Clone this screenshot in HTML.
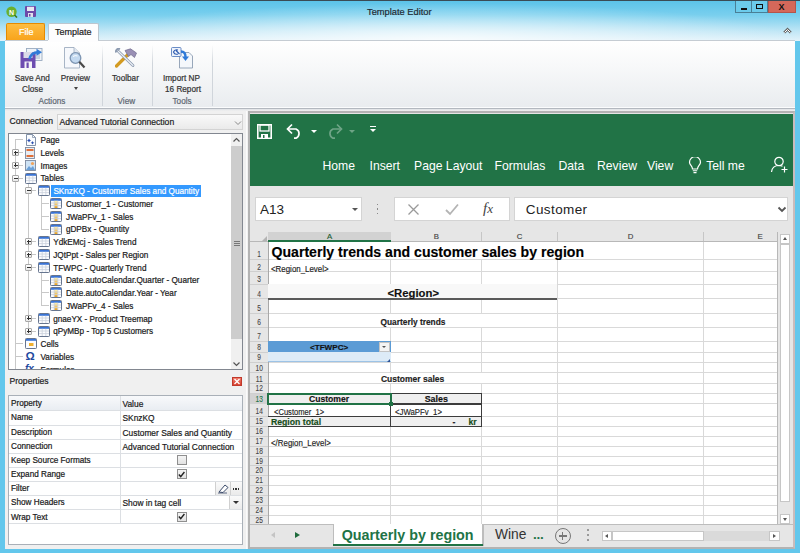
<!DOCTYPE html><html><head><meta charset="utf-8"><style>
*{margin:0;padding:0;box-sizing:border-box}
html,body{width:800px;height:553px;overflow:hidden;background:#63c7ec;font-family:"Liberation Sans", sans-serif;}
.ab{position:absolute}
.t{position:absolute;white-space:nowrap;line-height:1}
</style></head><body>

<div class="ab" style="left:0;top:0;width:800px;height:1px;background:#3a4b55"></div>
<div class="ab" style="left:0;top:1px;width:800px;height:40px;background:linear-gradient(#5cc3e9 0%,#79cfee 35%,#bfe6f6 75%,#e2f3fb 100%)"></div>
<div class="ab" style="left:0px;top:1px;width:800px;height:40px;background:radial-gradient(ellipse 45% 95% at 55% 100%,rgba(255,255,255,0.8),rgba(255,255,255,0) 100%)"></div>
<div class="t" style="left:367px;top:7.5px;font-size:9.3px;color:#1e2a33;-webkit-text-stroke:0.2px #1e2a33">Template Editor</div>
<div class="ab" style="left:735px;top:1px;width:17px;height:12px;border:1px solid #4a7f96;border-top:0;background:#6ccbeb"></div>
<div class="ab" style="left:741px;top:8px;width:6px;height:1.6px;background:#111"></div>
<div class="ab" style="left:751px;top:1px;width:17px;height:12px;border:1px solid #4a7f96;border-top:0;background:#6ccbeb"></div>
<div class="ab" style="left:756px;top:4px;width:7px;height:5px;border:1.5px solid #111"></div>
<div class="ab" style="left:768px;top:1px;width:28px;height:12px;background:#d4685a;border:1px solid #b5544a;border-top:0"></div>
<div class="t" style="left:778.5px;top:3px;font-size:9px;font-weight:bold;color:#111">X</div>
<svg class="ab" style="left:5px;top:6px" width="14" height="12" viewBox="0 0 14 12"><circle cx="6.5" cy="5.8" r="5.2" fill="#6ab02e"/><path d="M9.5 9 L12 11.5" stroke="#3d7a1a" stroke-width="1.6"/><text x="6.5" y="8.5" font-family="Liberation Sans" font-size="7" font-weight="bold" fill="#fff" text-anchor="middle">N</text></svg>
<svg class="ab" style="left:25px;top:6px" width="11" height="11" viewBox="0 0 11 11"><rect x="0" y="0" width="11" height="11" rx="1" fill="#6d4aa8"/><rect x="2" y="0.8" width="7" height="4.2" fill="#e8e8f0"/><rect x="3" y="7" width="5" height="4" fill="#e0e0ea"/><rect x="4" y="8" width="1.5" height="2.5" fill="#6d4aa8"/></svg>
<div class="ab" style="left:6px;top:23px;width:39px;height:18px;border:1px solid #e58a00;border-bottom:0;border-radius:2px 2px 0 0;background:linear-gradient(#fdbd40,#f8a21a)"></div>
<div class="t" style="left:19px;top:28px;font-size:9px;color:#fff;-webkit-text-stroke:0.2px #fff">File</div>
<div class="ab" style="left:48px;top:23px;width:51px;height:19px;border:1px solid #bcc6cf;border-bottom:0;border-radius:2px 2px 0 0;background:#fdfdfe"></div>
<div class="t" style="left:55px;top:28px;font-size:9px;color:#222;-webkit-text-stroke:0.2px #222">Template</div>
<svg class="ab" style="left:782.5px;top:27px" width="9" height="7" viewBox="0 0 9 7"><path d="M1.2 5.6 L4.5 2.3 L7.8 5.6" stroke="#666" stroke-width="2.6" fill="none"/><path d="M1.5 5.5 L4.5 2.5 L7.5 5.5" stroke="#fff" stroke-width="1" fill="none"/></svg>
<div class="ab" style="left:5px;top:40px;width:790px;height:68px;border-top:1px solid #c5ccd3;background:linear-gradient(#ffffff 0%,#f7f8f9 40%,#e9ecef 100%)"></div>
<div class="ab" style="left:48px;top:40px;width:50px;height:2px;background:#fdfdfe"></div>
<div class="ab" style="left:102px;top:45px;width:1px;height:61px;background:linear-gradient(rgba(200,205,212,0),#d0d5db 30%,#d0d5db)"></div>
<div class="ab" style="left:152px;top:45px;width:1px;height:61px;background:linear-gradient(rgba(200,205,212,0),#d0d5db 30%,#d0d5db)"></div>
<div class="ab" style="left:212px;top:45px;width:1px;height:61px;background:linear-gradient(rgba(200,205,212,0),#d0d5db 30%,#d0d5db)"></div>
<div class="t" style="left:14.8px;top:74.6px;font-size:8.2px;color:#333;-webkit-text-stroke:0.2px #333">Save And</div>
<div class="t" style="left:22px;top:85.6px;font-size:8.2px;color:#333;-webkit-text-stroke:0.2px #333">Close</div>
<div class="t" style="left:60.8px;top:74.6px;font-size:8.2px;color:#333;-webkit-text-stroke:0.2px #333">Preview</div>
<div class="ab" style="left:73.5px;top:87px;width:0;height:0;border-left:2.5px solid transparent;border-right:2.5px solid transparent;border-top:3px solid #444"></div>
<div class="t" style="left:38.5px;top:97.8px;font-size:8.2px;color:#5e6873;-webkit-text-stroke:0.2px #5e6873">Actions</div>
<div class="t" style="left:112px;top:74.6px;font-size:8.2px;color:#333;-webkit-text-stroke:0.2px #333">Toolbar</div>
<div class="t" style="left:117.5px;top:97.8px;font-size:8.2px;color:#5e6873;-webkit-text-stroke:0.2px #5e6873">View</div>
<div class="t" style="left:163px;top:74.6px;font-size:8.2px;color:#333;-webkit-text-stroke:0.2px #333">Import NP</div>
<div class="t" style="left:165px;top:85.6px;font-size:8.2px;color:#333;-webkit-text-stroke:0.2px #333">16 Report</div>
<div class="t" style="left:172.5px;top:97.8px;font-size:8.2px;color:#5e6873;-webkit-text-stroke:0.2px #5e6873">Tools</div>
<svg class="ab" style="left:20px;top:48px" width="24" height="21" viewBox="0 0 24 21">
<rect x="6.5" y="0.5" width="15.5" height="12" fill="#eef2f7" stroke="#9aabbf" stroke-width="0.9"/>
<rect x="14" y="6" width="6" height="5" fill="#c9d3e0"/>
<path d="M0.5 4 H13 L15.5 6.5 V20 H0.5Z" fill="#6d4db0"/>
<rect x="3.5" y="4" width="9" height="6" fill="#dcdbe8"/>
<rect x="4.5" y="13.5" width="7.5" height="6.5" fill="#f4f4f8"/>
<rect x="6.5" y="14.5" width="2.2" height="5.5" fill="#6d4db0"/>
<path d="M9.5 11 Q11 4.5 18 4.2" stroke="#2f7ad8" stroke-width="2.6" fill="none"/>
<path d="M16.5 0.8 L22 4.3 L16.5 7.8Z" fill="#2f7ad8"/>
</svg>
<svg class="ab" style="left:64px;top:47px" width="23" height="22" viewBox="0 0 23 22">
<path d="M0.5 0.5 H10 L15.5 6 V21 H0.5Z" fill="#f6f8fc" stroke="#9eadc0" stroke-width="0.9"/>
<path d="M10 0.5 V6 H15.5" fill="#e2e8f0" stroke="#9eadc0" stroke-width="0.8"/>
<circle cx="11.5" cy="11" r="5.3" fill="#c3d9f0" stroke="#7d95b2" stroke-width="1.3"/>
<path d="M9 9.5 Q11 8 13.5 9" stroke="#fff" stroke-width="1" fill="none"/>
<path d="M15.3 14.8 L20.5 20.5" stroke="#4a4a4a" stroke-width="2.2"/>
</svg>
<svg class="ab" style="left:115px;top:48px" width="23" height="20" viewBox="0 0 23 20">
<path d="M1.5 18 L13.5 6" stroke="#d39b22" stroke-width="3.2" stroke-linecap="round"/>
<path d="M10 2.5 L15.5 0.8 L21.5 5 L19.5 9.5 L16 6.5 L13.5 8.5Z" fill="#9a90b5" stroke="#6e6a8c" stroke-width="0.7"/>
<path d="M3.5 3.5 L18 17.5" stroke="#8c9ab0" stroke-width="2.8" stroke-linecap="round"/>
<path d="M1 4.5 A3 3 0 0 1 5 1" stroke="#8c9ab0" stroke-width="2" fill="none"/>
<path d="M3.5 3.5 L18 17.5" stroke="#eef2f7" stroke-width="1.1" stroke-linecap="round"/>
</svg>
<svg class="ab" style="left:171px;top:46.5px" width="23" height="22" viewBox="0 0 23 22">
<path d="M8.5 5.5 H18 L21.5 9 V21 H8.5Z" fill="#f4f7fb" stroke="#8d9db2" stroke-width="0.9"/>
<rect x="0.5" y="0.5" width="9.5" height="9" rx="1" fill="#eef3fb" stroke="#5a80c0" stroke-width="0.9"/>
<path d="M7 3 Q3.5 2 2.5 5 Q3.5 8 7 7 M5 3.5 L8.5 7" stroke="#2d5bb0" stroke-width="1.1" fill="none"/>
<path d="M10 4.5 Q14.5 4.5 14.5 10" stroke="#2f7ad8" stroke-width="2.4" fill="none"/>
<path d="M11 9.5 L14.5 14 L18 9.5Z" fill="#2f7ad8"/>
</svg>
<div class="ab" style="left:5px;top:108px;width:790px;height:441px;background:#f0f0f0"></div>
<div class="ab" style="left:5px;top:106.6px;width:790px;height:1px;background:#fbfcfd"></div>
<div class="ab" style="left:5px;top:107.6px;width:790px;height:1.5px;background:#b3b8bf"></div>
<div class="ab" style="left:5px;top:109.1px;width:790px;height:2px;background:linear-gradient(#dfe2e6,#f0f0f0)"></div>
<div class="ab" style="left:5px;top:111px;width:241px;height:438px;background:#f0f0f0"></div>
<div class="t" style="left:9.5px;top:116.8px;font-size:8.6px;color:#222;-webkit-text-stroke:0.2px #222">Connection</div>
<div class="ab" style="left:57px;top:114px;width:186px;height:16px;border:1px solid #d3d3d3;background:linear-gradient(#f9f9f9,#eaeaea)"></div>
<div class="t" style="left:59.5px;top:117.5px;font-size:8.6px;color:#222;-webkit-text-stroke:0.2px #222">Advanced Tutorial Connection</div>
<svg class="ab" style="left:233.5px;top:119.5px" width="8" height="6" viewBox="0 0 8 6"><path d="M1 1.5 L4 4.5 L7 1.5" stroke="#888" stroke-width="1" fill="none"/></svg>
<div class="ab" style="left:8px;top:133px;width:235px;height:237px;border:1px solid #828790;background:#fff;overflow:hidden">
<div class="ab" style="left:6.4px;top:5.800000000000011px;width:1px;height:229.5px;background:#c8c8c8"></div><div class="ab" style="left:18.9px;top:44.05000000000001px;width:1px;height:153.0px;background:#c8c8c8"></div><div class="ab" style="left:31.9px;top:56.80000000000001px;width:1px;height:38.25px;background:#c8c8c8"></div><div class="ab" style="left:31.9px;top:133.3px;width:1px;height:38.25px;background:#c8c8c8"></div><div class="ab" style="left:6.4px;top:5.300000000000011px;width:8px;height:1px;background:#c8c8c8"></div><svg class="ab" style="left:16.9px;top:0.4000000000000057px" width="10" height="12" viewBox="0 0 10 12"><path d="M0.5 0.5 H6.5 L9.5 3.5 V11.5 H0.5Z" fill="#fafcff" stroke="#7587a0" stroke-width="0.9"/><path d="M6.5 0.5 V3.5 H9.5" fill="none" stroke="#7587a0" stroke-width="0.7"/><path d="M3 4.5 L3.7 5.8 L5 6.5 L3.7 7.2 L3 8.5 L2.3 7.2 L1 6.5 L2.3 5.8Z M6.5 7 L7.1 8.2 L8.3 8.8 L7.1 9.4 L6.5 10.6 L5.9 9.4 L4.7 8.8 L5.9 8.2Z" fill="#2b4fb0"/></svg><div class="t" style="left:31.5px;top:3.0px;font-size:8.2px;color:#1a1a1a;-webkit-text-stroke:0.2px #1a1a1a">Page</div><div class="ab" style="left:6.4px;top:18.05000000000001px;width:8px;height:1px;background:#c8c8c8"></div><div class="ab" style="left:3.4000000000000004px;top:15.050000000000011px;width:7px;height:7px;border:1px solid #a8a8a8;border-radius:1px;background:linear-gradient(#fff,#e8e8e8)"></div><div class="ab" style="left:4.9px;top:18.05000000000001px;width:4px;height:1px;background:#333"></div><div class="ab" style="left:6.4px;top:16.55000000000001px;width:1px;height:4px;background:#333"></div><svg class="ab" style="left:15.899999999999999px;top:13.150000000000006px" width="10" height="12" viewBox="0 0 10 12"><rect x="0.5" y="0.5" width="9" height="11" fill="#e9edf3" stroke="#7d8ba0" stroke-width="0.9"/><rect x="1.5" y="2" width="7" height="2" fill="#e0703a"/><rect x="1.5" y="8" width="7" height="2" fill="#e0703a"/></svg><div class="t" style="left:31.5px;top:15.75px;font-size:8.2px;color:#1a1a1a;-webkit-text-stroke:0.2px #1a1a1a">Levels</div><div class="ab" style="left:6.4px;top:30.80000000000001px;width:8px;height:1px;background:#c8c8c8"></div><div class="ab" style="left:3.4000000000000004px;top:27.80000000000001px;width:7px;height:7px;border:1px solid #a8a8a8;border-radius:1px;background:linear-gradient(#fff,#e8e8e8)"></div><div class="ab" style="left:4.9px;top:30.80000000000001px;width:4px;height:1px;background:#333"></div><div class="ab" style="left:6.4px;top:29.30000000000001px;width:1px;height:4px;background:#333"></div><svg class="ab" style="left:15.899999999999999px;top:25.900000000000006px" width="11" height="11" viewBox="0 0 11 11"><rect x="0.5" y="0.5" width="10" height="10" fill="#cfe3f5" stroke="#7d8ba0" stroke-width="0.9"/><circle cx="7.5" cy="3.5" r="1.6" fill="#f2a35a"/><path d="M1 10 L4 6 L6 8 L8 6 L10 10Z" fill="#6aa0d8"/></svg><div class="t" style="left:31.5px;top:28.5px;font-size:8.2px;color:#1a1a1a;-webkit-text-stroke:0.2px #1a1a1a">Images</div><div class="ab" style="left:6.4px;top:43.55000000000001px;width:8px;height:1px;background:#c8c8c8"></div><div class="ab" style="left:3.4000000000000004px;top:40.55000000000001px;width:7px;height:7px;border:1px solid #a8a8a8;border-radius:1px;background:linear-gradient(#fff,#e8e8e8)"></div><div class="ab" style="left:4.9px;top:43.55000000000001px;width:4px;height:1px;background:#333"></div><svg class="ab" style="left:15.899999999999999px;top:38.650000000000006px" width="12" height="11" viewBox="0 0 12 11"><rect x="0.5" y="0.5" width="11" height="10" rx="0.8" fill="#fbfcfe" stroke="#66758f" stroke-width="1"/><rect x="1" y="1" width="10" height="1.8" fill="#3a74d6"/><path d="M1 5 H11 M1 7.6 H11 M4.2 2.8 V10 M7.8 2.8 V10" stroke="#c9d1dc" stroke-width="0.8"/></svg><div class="t" style="left:31.5px;top:41.25px;font-size:8.2px;color:#1a1a1a;-webkit-text-stroke:0.2px #1a1a1a">Tables</div><div class="ab" style="left:19.15px;top:56.30000000000001px;width:8px;height:1px;background:#c8c8c8"></div><div class="ab" style="left:16.15px;top:53.30000000000001px;width:7px;height:7px;border:1px solid #a8a8a8;border-radius:1px;background:linear-gradient(#fff,#e8e8e8)"></div><div class="ab" style="left:17.65px;top:56.30000000000001px;width:4px;height:1px;background:#333"></div><svg class="ab" style="left:28.65px;top:51.400000000000006px" width="12" height="11" viewBox="0 0 12 11"><rect x="0.5" y="0.5" width="11" height="10" rx="0.8" fill="#fbfcfe" stroke="#66758f" stroke-width="1"/><rect x="1" y="1" width="10" height="1.8" fill="#3a74d6"/><path d="M1 5 H11 M1 7.6 H11 M4.2 2.8 V10 M7.8 2.8 V10" stroke="#c9d1dc" stroke-width="0.8"/></svg><div class="ab" style="left:41.6px;top:51.30000000000001px;width:150px;height:12px;background:#3399ff"></div><div class="t" style="left:44.400000000000006px;top:54.0px;font-size:8.2px;color:#fff;-webkit-text-stroke:0.2px #fff">SKnzKQ - Customer Sales and Quantity</div><div class="ab" style="left:31.9px;top:69.05000000000001px;width:8px;height:1px;background:#c8c8c8"></div><svg class="ab" style="left:41.4px;top:64.15px" width="12" height="11" viewBox="0 0 12 11"><defs><linearGradient id="yg" x1="0" y1="0" x2="0" y2="1"><stop offset="0" stop-color="#fff2b0"/><stop offset="1" stop-color="#e8a020"/></linearGradient></defs><rect x="0.5" y="0.5" width="11" height="10" rx="0.8" fill="#fbfcfe" stroke="#66758f" stroke-width="1"/><rect x="1" y="1" width="10" height="1.8" fill="#3a74d6"/><rect x="4.2" y="2.8" width="3.6" height="7.2" fill="url(#yg)"/><path d="M1 5 H11 M1 7.6 H11 M4.2 2.8 V10 M7.8 2.8 V10" stroke="#c9d1dc" stroke-width="0.8"/></svg><div class="t" style="left:56.900000000000006px;top:66.75px;font-size:8.2px;color:#1a1a1a;-webkit-text-stroke:0.2px #1a1a1a">Customer_1 - Customer</div><div class="ab" style="left:31.9px;top:81.80000000000001px;width:8px;height:1px;background:#c8c8c8"></div><svg class="ab" style="left:41.4px;top:76.9px" width="12" height="11" viewBox="0 0 12 11"><defs><linearGradient id="yg" x1="0" y1="0" x2="0" y2="1"><stop offset="0" stop-color="#fff2b0"/><stop offset="1" stop-color="#e8a020"/></linearGradient></defs><rect x="0.5" y="0.5" width="11" height="10" rx="0.8" fill="#fbfcfe" stroke="#66758f" stroke-width="1"/><rect x="1" y="1" width="10" height="1.8" fill="#3a74d6"/><rect x="4.2" y="2.8" width="3.6" height="7.2" fill="url(#yg)"/><path d="M1 5 H11 M1 7.6 H11 M4.2 2.8 V10 M7.8 2.8 V10" stroke="#c9d1dc" stroke-width="0.8"/></svg><div class="t" style="left:56.900000000000006px;top:79.5px;font-size:8.2px;color:#1a1a1a;-webkit-text-stroke:0.2px #1a1a1a">JWaPFv_1 - Sales</div><div class="ab" style="left:31.9px;top:94.55000000000001px;width:8px;height:1px;background:#c8c8c8"></div><svg class="ab" style="left:41.4px;top:89.65px" width="12" height="11" viewBox="0 0 12 11"><defs><linearGradient id="yg" x1="0" y1="0" x2="0" y2="1"><stop offset="0" stop-color="#fff2b0"/><stop offset="1" stop-color="#e8a020"/></linearGradient></defs><rect x="0.5" y="0.5" width="11" height="10" rx="0.8" fill="#fbfcfe" stroke="#66758f" stroke-width="1"/><rect x="1" y="1" width="10" height="1.8" fill="#3a74d6"/><rect x="4.2" y="2.8" width="3.6" height="7.2" fill="url(#yg)"/><path d="M1 5 H11 M1 7.6 H11 M4.2 2.8 V10 M7.8 2.8 V10" stroke="#c9d1dc" stroke-width="0.8"/></svg><div class="t" style="left:56.900000000000006px;top:92.25px;font-size:8.2px;color:#1a1a1a;-webkit-text-stroke:0.2px #1a1a1a">gDPBx - Quantity</div><div class="ab" style="left:19.15px;top:107.30000000000001px;width:8px;height:1px;background:#c8c8c8"></div><div class="ab" style="left:16.15px;top:104.30000000000001px;width:7px;height:7px;border:1px solid #a8a8a8;border-radius:1px;background:linear-gradient(#fff,#e8e8e8)"></div><div class="ab" style="left:17.65px;top:107.30000000000001px;width:4px;height:1px;background:#333"></div><div class="ab" style="left:19.15px;top:105.80000000000001px;width:1px;height:4px;background:#333"></div><svg class="ab" style="left:28.65px;top:102.4px" width="12" height="11" viewBox="0 0 12 11"><rect x="0.5" y="0.5" width="11" height="10" rx="0.8" fill="#fbfcfe" stroke="#66758f" stroke-width="1"/><rect x="1" y="1" width="10" height="1.8" fill="#3a74d6"/><path d="M1 5 H11 M1 7.6 H11 M4.2 2.8 V10 M7.8 2.8 V10" stroke="#c9d1dc" stroke-width="0.8"/></svg><div class="t" style="left:44.2px;top:105.0px;font-size:8.2px;color:#1a1a1a;-webkit-text-stroke:0.2px #1a1a1a">YdkEMcj - Sales Trend</div><div class="ab" style="left:19.15px;top:120.05000000000001px;width:8px;height:1px;background:#c8c8c8"></div><div class="ab" style="left:16.15px;top:117.05000000000001px;width:7px;height:7px;border:1px solid #a8a8a8;border-radius:1px;background:linear-gradient(#fff,#e8e8e8)"></div><div class="ab" style="left:17.65px;top:120.05000000000001px;width:4px;height:1px;background:#333"></div><div class="ab" style="left:19.15px;top:118.55000000000001px;width:1px;height:4px;background:#333"></div><svg class="ab" style="left:28.65px;top:115.15px" width="12" height="11" viewBox="0 0 12 11"><rect x="0.5" y="0.5" width="11" height="10" rx="0.8" fill="#fbfcfe" stroke="#66758f" stroke-width="1"/><rect x="1" y="1" width="10" height="1.8" fill="#3a74d6"/><path d="M1 5 H11 M1 7.6 H11 M4.2 2.8 V10 M7.8 2.8 V10" stroke="#c9d1dc" stroke-width="0.8"/></svg><div class="t" style="left:44.2px;top:117.75px;font-size:8.2px;color:#1a1a1a;-webkit-text-stroke:0.2px #1a1a1a">JQtPpt - Sales per Region</div><div class="ab" style="left:19.15px;top:132.8px;width:8px;height:1px;background:#c8c8c8"></div><div class="ab" style="left:16.15px;top:129.8px;width:7px;height:7px;border:1px solid #a8a8a8;border-radius:1px;background:linear-gradient(#fff,#e8e8e8)"></div><div class="ab" style="left:17.65px;top:132.8px;width:4px;height:1px;background:#333"></div><svg class="ab" style="left:28.65px;top:127.90000000000003px" width="12" height="11" viewBox="0 0 12 11"><rect x="0.5" y="0.5" width="11" height="10" rx="0.8" fill="#fbfcfe" stroke="#66758f" stroke-width="1"/><rect x="1" y="1" width="10" height="1.8" fill="#3a74d6"/><path d="M1 5 H11 M1 7.6 H11 M4.2 2.8 V10 M7.8 2.8 V10" stroke="#c9d1dc" stroke-width="0.8"/></svg><div class="t" style="left:44.2px;top:130.5px;font-size:8.2px;color:#1a1a1a;-webkit-text-stroke:0.2px #1a1a1a">TFWPC - Quarterly Trend</div><div class="ab" style="left:31.9px;top:145.55px;width:8px;height:1px;background:#c8c8c8"></div><svg class="ab" style="left:41.4px;top:140.65000000000003px" width="12" height="11" viewBox="0 0 12 11"><defs><linearGradient id="yg" x1="0" y1="0" x2="0" y2="1"><stop offset="0" stop-color="#fff2b0"/><stop offset="1" stop-color="#e8a020"/></linearGradient></defs><rect x="0.5" y="0.5" width="11" height="10" rx="0.8" fill="#fbfcfe" stroke="#66758f" stroke-width="1"/><rect x="1" y="1" width="10" height="1.8" fill="#3a74d6"/><rect x="4.2" y="2.8" width="3.6" height="7.2" fill="url(#yg)"/><path d="M1 5 H11 M1 7.6 H11 M4.2 2.8 V10 M7.8 2.8 V10" stroke="#c9d1dc" stroke-width="0.8"/></svg><div class="t" style="left:56.900000000000006px;top:143.25px;font-size:8.2px;color:#1a1a1a;-webkit-text-stroke:0.2px #1a1a1a">Date.autoCalendar.Quarter - Quarter</div><div class="ab" style="left:31.9px;top:158.3px;width:8px;height:1px;background:#c8c8c8"></div><svg class="ab" style="left:41.4px;top:153.40000000000003px" width="12" height="11" viewBox="0 0 12 11"><defs><linearGradient id="yg" x1="0" y1="0" x2="0" y2="1"><stop offset="0" stop-color="#fff2b0"/><stop offset="1" stop-color="#e8a020"/></linearGradient></defs><rect x="0.5" y="0.5" width="11" height="10" rx="0.8" fill="#fbfcfe" stroke="#66758f" stroke-width="1"/><rect x="1" y="1" width="10" height="1.8" fill="#3a74d6"/><rect x="4.2" y="2.8" width="3.6" height="7.2" fill="url(#yg)"/><path d="M1 5 H11 M1 7.6 H11 M4.2 2.8 V10 M7.8 2.8 V10" stroke="#c9d1dc" stroke-width="0.8"/></svg><div class="t" style="left:56.900000000000006px;top:156.0px;font-size:8.2px;color:#1a1a1a;-webkit-text-stroke:0.2px #1a1a1a">Date.autoCalendar.Year - Year</div><div class="ab" style="left:31.9px;top:171.05px;width:8px;height:1px;background:#c8c8c8"></div><svg class="ab" style="left:41.4px;top:166.15000000000003px" width="12" height="11" viewBox="0 0 12 11"><defs><linearGradient id="yg" x1="0" y1="0" x2="0" y2="1"><stop offset="0" stop-color="#fff2b0"/><stop offset="1" stop-color="#e8a020"/></linearGradient></defs><rect x="0.5" y="0.5" width="11" height="10" rx="0.8" fill="#fbfcfe" stroke="#66758f" stroke-width="1"/><rect x="1" y="1" width="10" height="1.8" fill="#3a74d6"/><rect x="4.2" y="2.8" width="3.6" height="7.2" fill="url(#yg)"/><path d="M1 5 H11 M1 7.6 H11 M4.2 2.8 V10 M7.8 2.8 V10" stroke="#c9d1dc" stroke-width="0.8"/></svg><div class="t" style="left:56.900000000000006px;top:168.75px;font-size:8.2px;color:#1a1a1a;-webkit-text-stroke:0.2px #1a1a1a">JWaPFv_4 - Sales</div><div class="ab" style="left:19.15px;top:183.8px;width:8px;height:1px;background:#c8c8c8"></div><div class="ab" style="left:16.15px;top:180.8px;width:7px;height:7px;border:1px solid #a8a8a8;border-radius:1px;background:linear-gradient(#fff,#e8e8e8)"></div><div class="ab" style="left:17.65px;top:183.8px;width:4px;height:1px;background:#333"></div><div class="ab" style="left:19.15px;top:182.3px;width:1px;height:4px;background:#333"></div><svg class="ab" style="left:28.65px;top:178.90000000000003px" width="12" height="11" viewBox="0 0 12 11"><rect x="0.5" y="0.5" width="11" height="10" rx="0.8" fill="#fbfcfe" stroke="#66758f" stroke-width="1"/><rect x="1" y="1" width="10" height="1.8" fill="#3a74d6"/><path d="M1 5 H11 M1 7.6 H11 M4.2 2.8 V10 M7.8 2.8 V10" stroke="#c9d1dc" stroke-width="0.8"/></svg><div class="t" style="left:44.2px;top:181.5px;font-size:8.2px;color:#1a1a1a;-webkit-text-stroke:0.2px #1a1a1a">gnaeYX - Product Treemap</div><div class="ab" style="left:19.15px;top:196.55px;width:8px;height:1px;background:#c8c8c8"></div><div class="ab" style="left:16.15px;top:193.55px;width:7px;height:7px;border:1px solid #a8a8a8;border-radius:1px;background:linear-gradient(#fff,#e8e8e8)"></div><div class="ab" style="left:17.65px;top:196.55px;width:4px;height:1px;background:#333"></div><div class="ab" style="left:19.15px;top:195.05px;width:1px;height:4px;background:#333"></div><svg class="ab" style="left:28.65px;top:191.65000000000003px" width="12" height="11" viewBox="0 0 12 11"><rect x="0.5" y="0.5" width="11" height="10" rx="0.8" fill="#fbfcfe" stroke="#66758f" stroke-width="1"/><rect x="1" y="1" width="10" height="1.8" fill="#3a74d6"/><path d="M1 5 H11 M1 7.6 H11 M4.2 2.8 V10 M7.8 2.8 V10" stroke="#c9d1dc" stroke-width="0.8"/></svg><div class="t" style="left:44.2px;top:194.25px;font-size:8.2px;color:#1a1a1a;-webkit-text-stroke:0.2px #1a1a1a">qPyMBp - Top 5 Customers</div><div class="ab" style="left:6.4px;top:209.3px;width:8px;height:1px;background:#c8c8c8"></div><svg class="ab" style="left:15.899999999999999px;top:204.40000000000003px" width="12" height="11" viewBox="0 0 12 11"><rect x="0.5" y="0.5" width="11" height="10" rx="0.8" fill="#fbfcfe" stroke="#66758f" stroke-width="1"/><rect x="1" y="1" width="10" height="1.8" fill="#3a74d6"/><rect x="4" y="5" width="4.5" height="3" fill="#f0b030"/></svg><div class="t" style="left:31.5px;top:207.0px;font-size:8.2px;color:#1a1a1a;-webkit-text-stroke:0.2px #1a1a1a">Cells</div><div class="ab" style="left:6.4px;top:222.05px;width:8px;height:1px;background:#c8c8c8"></div><div class="t" style="left:16.4px;top:216.65000000000003px;font-size:11.5px;font-weight:bold;color:#1f4aa0">&#937;</div><div class="t" style="left:31.5px;top:219.75px;font-size:8.2px;color:#1a1a1a;-webkit-text-stroke:0.2px #1a1a1a">Variables</div><div class="ab" style="left:6.4px;top:234.8px;width:8px;height:1px;background:#c8c8c8"></div><div class="t" style="left:15.899999999999999px;top:229.90000000000003px;font-size:10px;font-style:italic;font-weight:bold;color:#1f4aa0">fx</div><div class="t" style="left:31.5px;top:232.5px;font-size:8.2px;color:#1a1a1a;-webkit-text-stroke:0.2px #1a1a1a">Formulas</div><div class="ab" style="left:222px;top:0;width:11px;height:235px;background:#f0f0f0"></div><div class="ab" style="left:222px;top:12.300000000000011px;width:11px;height:193px;background:#cdcdcd"></div><svg class="ab" style="left:223px;top:2px" width="9" height="8" viewBox="0 0 9 8"><path d="M1.5 5.5 L4.5 2.5 L7.5 5.5" stroke="#555" stroke-width="1.2" fill="none"/></svg><svg class="ab" style="left:223px;top:226px" width="9" height="8" viewBox="0 0 9 8"><path d="M1.5 2.5 L4.5 5.5 L7.5 2.5" stroke="#555" stroke-width="1.2" fill="none"/></svg><div class="ab" style="left:224.5px;top:107px;width:6px;height:5px;border-top:1px solid #777;border-bottom:1px solid #777"></div><div class="ab" style="left:224.5px;top:109px;width:6px;height:1px;background:#777"></div>
</div>
<div class="t" style="left:9.5px;top:377px;font-size:8.6px;color:#222;-webkit-text-stroke:0.2px #222">Properties</div>
<div class="ab" style="left:232px;top:377px;width:10px;height:9px;border:1px solid #c0392b;background:linear-gradient(#f07a6a,#d6402e)"></div>
<svg class="ab" style="left:233px;top:378px" width="8" height="7" viewBox="0 0 8 7"><path d="M1.5 1 L6.5 6 M6.5 1 L1.5 6" stroke="#fff" stroke-width="1.3"/></svg>
<div class="ab" style="left:8px;top:395px;width:235px;height:150px;border:1px solid #a9b0b8;background:#fff"></div>
<div class="ab" style="left:9px;top:396px;width:233px;height:14px;background:linear-gradient(#f8f9fb,#e9edf2)"></div>
<div class="ab" style="left:9px;top:409.7px;width:233px;height:1px;background:#dcdfe3"></div>
<div class="ab" style="left:9px;top:424.6px;width:233px;height:1px;background:#dcdfe3"></div>
<div class="ab" style="left:9px;top:438.9px;width:233px;height:1px;background:#dcdfe3"></div>
<div class="ab" style="left:9px;top:452.8px;width:233px;height:1px;background:#dcdfe3"></div>
<div class="ab" style="left:9px;top:467.0px;width:233px;height:1px;background:#dcdfe3"></div>
<div class="ab" style="left:9px;top:481.3px;width:233px;height:1px;background:#dcdfe3"></div>
<div class="ab" style="left:9px;top:495.2px;width:233px;height:1px;background:#dcdfe3"></div>
<div class="ab" style="left:9px;top:509.4px;width:233px;height:1px;background:#dcdfe3"></div>
<div class="ab" style="left:9px;top:523.3px;width:233px;height:1px;background:#dcdfe3"></div>
<div class="ab" style="left:119.8px;top:396px;width:1px;height:128px;background:#dcdfe3"></div>
<div class="t" style="left:11px;top:399.5px;font-size:8.2px;color:#1a1a1a;-webkit-text-stroke:0.2px #1a1a1a">Property</div>
<div class="t" style="left:122.5px;top:399.5px;font-size:8.4px;color:#1a1a1a;-webkit-text-stroke:0.2px #1a1a1a">Value</div>
<div class="t" style="left:11px;top:413.8px;font-size:8.2px;color:#1a1a1a;-webkit-text-stroke:0.2px #1a1a1a">Name</div>
<div class="t" style="left:122.5px;top:413.8px;font-size:8.4px;color:#1a1a1a;-webkit-text-stroke:0.2px #1a1a1a">SKnzKQ</div>
<div class="t" style="left:11px;top:428.70000000000005px;font-size:8.2px;color:#1a1a1a;-webkit-text-stroke:0.2px #1a1a1a">Description</div>
<div class="t" style="left:122.5px;top:428.70000000000005px;font-size:8.4px;color:#1a1a1a;-webkit-text-stroke:0.2px #1a1a1a">Customer Sales and Quantity</div>
<div class="t" style="left:11px;top:443.0px;font-size:8.2px;color:#1a1a1a;-webkit-text-stroke:0.2px #1a1a1a">Connection</div>
<div class="t" style="left:122.5px;top:443.0px;font-size:8.4px;color:#1a1a1a;-webkit-text-stroke:0.2px #1a1a1a">Advanced Tutorial Connection</div>
<div class="t" style="left:11px;top:456.90000000000003px;font-size:8.2px;color:#1a1a1a;-webkit-text-stroke:0.2px #1a1a1a">Keep Source Formats</div>
<div class="t" style="left:11px;top:471.1px;font-size:8.2px;color:#1a1a1a;-webkit-text-stroke:0.2px #1a1a1a">Expand Range</div>
<div class="t" style="left:11px;top:485.40000000000003px;font-size:8.2px;color:#1a1a1a;-webkit-text-stroke:0.2px #1a1a1a">Filter</div>
<div class="t" style="left:11px;top:499.3px;font-size:8.2px;color:#1a1a1a;-webkit-text-stroke:0.2px #1a1a1a">Show Headers</div>
<div class="t" style="left:122.5px;top:499.3px;font-size:8.4px;color:#1a1a1a;-webkit-text-stroke:0.2px #1a1a1a">Show in tag cell</div>
<div class="t" style="left:11px;top:513.4999999999999px;font-size:8.2px;color:#1a1a1a;-webkit-text-stroke:0.2px #1a1a1a">Wrap Text</div>
<div class="ab" style="left:176.5px;top:455.0px;width:10px;height:10px;border:1px solid #8f8f8f;background:linear-gradient(#f4f4f4,#e2e2e2)"></div>
<div class="ab" style="left:176.5px;top:469.2px;width:10px;height:10px;border:1px solid #8f8f8f;background:linear-gradient(#f4f4f4,#e2e2e2)"></div>
<svg class="ab" style="left:177px;top:469.7px" width="9" height="9" viewBox="0 0 9 9"><path d="M1.8 4.6 L3.7 6.6 L7.4 2" stroke="#222" stroke-width="1.4" fill="none"/></svg>
<div class="ab" style="left:176.5px;top:511.6px;width:10px;height:10px;border:1px solid #8f8f8f;background:linear-gradient(#f4f4f4,#e2e2e2)"></div>
<svg class="ab" style="left:177px;top:512.1px" width="9" height="9" viewBox="0 0 9 9"><path d="M1.8 4.6 L3.7 6.6 L7.4 2" stroke="#222" stroke-width="1.4" fill="none"/></svg>
<div class="ab" style="left:215px;top:482.3px;width:15px;height:13px;border-left:1px solid #d0d0d0;background:linear-gradient(#fafafa,#eaeaea)"></div>
<svg class="ab" style="left:217px;top:483.3px" width="12" height="11" viewBox="0 0 12 11"><path d="M2 9 L8 2 L11 4.5 L6 9.5 Z" fill="#fff" stroke="#3a4a6a" stroke-width="1"/><path d="M1 10 H10" stroke="#3a4a6a" stroke-width="0.8"/></svg>
<div class="ab" style="left:230px;top:482.3px;width:12px;height:13px;border-left:1px solid #d0d0d0;background:linear-gradient(#fafafa,#eaeaea)"></div>
<div class="ab" style="left:232.8px;top:488.3px;width:1.3px;height:1.3px;background:#333"></div>
<div class="ab" style="left:235.3px;top:488.3px;width:1.3px;height:1.3px;background:#333"></div>
<div class="ab" style="left:237.8px;top:488.3px;width:1.3px;height:1.3px;background:#333"></div>
<div class="ab" style="left:229px;top:496.2px;width:13px;height:13px;border-left:1px solid #d0d0d0;background:linear-gradient(#fafafa,#ececec)"></div>
<div class="ab" style="left:233px;top:501.2px;width:0;height:0;border-left:3px solid transparent;border-right:3px solid transparent;border-top:3px solid #333"></div>
<div class="ab" style="left:246px;top:111px;width:1.2px;height:438px;background:#fbfbfb"></div>
<div class="ab" style="left:247.5px;top:111px;width:547.5px;height:438px;background:#e6e6e6;border:2px solid #b9b9b9;border-color:#b3b3b3 #c9bcbc #b3b3b3 #b3b3b3"></div>
<div class="ab" style="left:249.5px;top:113.5px;width:543.5px;height:72.5px;background:#217346"></div>
<svg class="ab" style="left:257px;top:123.5px" width="15" height="15" viewBox="0 0 15 15">
<path d="M0.8 0.8 H14.2 V14.2 H0.8Z" fill="none" stroke="#fff" stroke-width="1.6"/>
<rect x="3" y="1" width="9" height="6" fill="none" stroke="#fff" stroke-width="1.3"/>
<rect x="4" y="10" width="7" height="4.5" fill="#fff"/><rect x="6" y="11" width="1.5" height="3" fill="#217346"/>
</svg>
<svg class="ab" style="left:286px;top:123px" width="18" height="16" viewBox="0 0 18 16">
<path d="M2 6 H10 A5 5 0 0 1 10 15.2 H8" fill="none" stroke="#fff" stroke-width="1.7"/>
<path d="M6 1.5 L1.5 6 L6 10.5" fill="none" stroke="#fff" stroke-width="1.7"/>
</svg>
<div class="ab" style="left:310.5px;top:129.5px;width:0;height:0;border-left:3px solid transparent;border-right:3px solid transparent;border-top:3px solid #fff"></div>
<svg class="ab" style="left:325px;top:123px" width="18" height="16" viewBox="0 0 18 16" opacity="0.35">
<path d="M16 6 H8 A5 5 0 0 0 8 15.2 H10" fill="none" stroke="#fff" stroke-width="1.7"/>
<path d="M12 1.5 L16.5 6 L12 10.5" fill="none" stroke="#fff" stroke-width="1.7"/>
</svg>
<div class="ab" style="left:348.5px;top:129.5px;width:0;height:0;border-left:3px solid transparent;border-right:3px solid transparent;border-top:3px solid rgba(255,255,255,0.35)"></div>
<div class="ab" style="left:369.5px;top:126px;width:6px;height:1.3px;background:#fff"></div>
<div class="ab" style="left:369.5px;top:129px;width:0;height:0;border-left:3px solid transparent;border-right:3px solid transparent;border-top:3.5px solid #fff"></div>
<div class="t" style="left:322.5px;top:159.5px;font-size:12.2px;color:#fff">Home</div>
<div class="t" style="left:369.5px;top:159.5px;font-size:12.2px;color:#fff">Insert</div>
<div class="t" style="left:414px;top:159.5px;font-size:12.2px;color:#fff">Page Layout</div>
<div class="t" style="left:494.5px;top:159.5px;font-size:12.2px;color:#fff">Formulas</div>
<div class="t" style="left:558.5px;top:159.5px;font-size:12.2px;color:#fff">Data</div>
<div class="t" style="left:597px;top:159.5px;font-size:12.2px;color:#fff">Review</div>
<div class="t" style="left:647px;top:159.5px;font-size:12.2px;color:#fff">View</div>
<div class="t" style="left:706.2px;top:159.5px;font-size:12.2px;color:#fff">Tell me</div>
<svg class="ab" style="left:688px;top:157px" width="14" height="17" viewBox="0 0 14 17">
<path d="M4.5 12 C4.5 9 1.5 8 1.5 5.2 A5.5 5.5 0 0 1 12.5 5.2 C12.5 8 9.5 9 9.5 12Z" fill="none" stroke="#fff" stroke-width="1.2"/>
<path d="M4.8 13.8 H9.2 M5.5 15.6 H8.5" stroke="#fff" stroke-width="1.1"/>
</svg>
<svg class="ab" style="left:770px;top:156px" width="19" height="17" viewBox="0 0 19 17">
<circle cx="9" cy="5.5" r="4.2" fill="none" stroke="#fff" stroke-width="1.2"/>
<path d="M1.5 16 C2 11.5 5 9.5 9 9.5 C10.5 9.5 11.5 9.8 12.5 10.3" fill="none" stroke="#fff" stroke-width="1.2"/>
<path d="M14.5 10.5 V16.5 M11.5 13.5 H17.5" stroke="#fff" stroke-width="1.2"/>
</svg>
<div class="ab" style="left:254.7px;top:197.3px;width:107.5px;height:24px;background:#fff;border:1px solid #d4d4d4"></div>
<div class="t" style="left:260px;top:203px;font-size:13.5px;color:#222">A13</div>
<div class="ab" style="left:352px;top:208px;width:0;height:0;border-left:3.2px solid transparent;border-right:3.2px solid transparent;border-top:3.2px solid #555"></div>
<div class="ab" style="left:376.8px;top:203.8px;width:1.6px;height:1.6px;background:#8a8a8a"></div>
<div class="ab" style="left:376.8px;top:208.3px;width:1.6px;height:1.6px;background:#8a8a8a"></div>
<div class="ab" style="left:376.8px;top:212.8px;width:1.6px;height:1.6px;background:#8a8a8a"></div>
<div class="ab" style="left:394.4px;top:197.4px;width:116px;height:24px;background:#fff;border:1px solid #d4d4d4"></div>
<svg class="ab" style="left:407px;top:203px" width="13" height="13" viewBox="0 0 13 13"><path d="M1.5 1.5 L11.5 11.5 M11.5 1.5 L1.5 11.5" stroke="#9a9a9a" stroke-width="1.3"/></svg>
<svg class="ab" style="left:445px;top:203px" width="14" height="13" viewBox="0 0 14 13"><path d="M1 7 L5 11 L13 1.5" stroke="#b4b4b4" stroke-width="1.8" fill="none"/></svg>
<div class="t" style="left:483px;top:201px;font-size:15px;font-style:italic;font-family:'Liberation Serif',serif;color:#444">f<span style="font-size:13px">x</span></div>
<div class="ab" style="left:514px;top:197.3px;width:273.6px;height:24px;background:#fff;border:1px solid #d4d4d4"></div>
<div class="t" style="left:525.8px;top:203px;font-size:13.5px;letter-spacing:0.4px;color:#222">Customer</div>
<svg class="ab" style="left:777px;top:206px" width="10" height="7" viewBox="0 0 10 7"><path d="M1.5 1.5 L5 5 L8.5 1.5" stroke="#555" stroke-width="1.8" fill="none"/></svg>
<div class="ab" style="left:250px;top:232.2px;width:527.5px;height:292.00000000000006px;overflow:hidden"><div class="ab" style="left:0px;top:0.0px;width:527.5px;height:9.600000000000023px;background:#e6e6e6;"></div><div class="ab" style="left:0px;top:0.0px;width:18.30000000000001px;height:292.00000000000006px;background:#e6e6e6;"></div><div class="ab" style="left:18.30000000000001px;top:9.600000000000023px;width:509.2px;height:282.40000000000003px;background:#fff;"></div><div class="ab" style="left:18.30000000000001px;top:26.80000000000001px;width:509.2px;height:1px;background:#d9d9d9;"></div><div class="ab" style="left:0px;top:26.80000000000001px;width:18.30000000000001px;height:1px;background:#cfcfcf;"></div><div class="ab" style="left:18.30000000000001px;top:39.30000000000001px;width:509.2px;height:1px;background:#d9d9d9;"></div><div class="ab" style="left:0px;top:39.30000000000001px;width:18.30000000000001px;height:1px;background:#cfcfcf;"></div><div class="ab" style="left:18.30000000000001px;top:51.80000000000001px;width:509.2px;height:1px;background:#d9d9d9;"></div><div class="ab" style="left:0px;top:51.80000000000001px;width:18.30000000000001px;height:1px;background:#cfcfcf;"></div><div class="ab" style="left:18.30000000000001px;top:66.30000000000001px;width:509.2px;height:1px;background:#d9d9d9;"></div><div class="ab" style="left:0px;top:66.30000000000001px;width:18.30000000000001px;height:1px;background:#cfcfcf;"></div><div class="ab" style="left:18.30000000000001px;top:80.80000000000001px;width:509.2px;height:1px;background:#d9d9d9;"></div><div class="ab" style="left:0px;top:80.80000000000001px;width:18.30000000000001px;height:1px;background:#cfcfcf;"></div><div class="ab" style="left:18.30000000000001px;top:94.90000000000003px;width:509.2px;height:1px;background:#d9d9d9;"></div><div class="ab" style="left:0px;top:94.90000000000003px;width:18.30000000000001px;height:1px;background:#cfcfcf;"></div><div class="ab" style="left:18.30000000000001px;top:108.80000000000001px;width:509.2px;height:1px;background:#d9d9d9;"></div><div class="ab" style="left:0px;top:108.80000000000001px;width:18.30000000000001px;height:1px;background:#cfcfcf;"></div><div class="ab" style="left:18.30000000000001px;top:119.80000000000001px;width:509.2px;height:1px;background:#d9d9d9;"></div><div class="ab" style="left:0px;top:119.80000000000001px;width:18.30000000000001px;height:1px;background:#cfcfcf;"></div><div class="ab" style="left:18.30000000000001px;top:129.8px;width:509.2px;height:1px;background:#d9d9d9;"></div><div class="ab" style="left:0px;top:129.8px;width:18.30000000000001px;height:1px;background:#cfcfcf;"></div><div class="ab" style="left:18.30000000000001px;top:140.3px;width:509.2px;height:1px;background:#d9d9d9;"></div><div class="ab" style="left:0px;top:140.3px;width:18.30000000000001px;height:1px;background:#cfcfcf;"></div><div class="ab" style="left:18.30000000000001px;top:151.3px;width:509.2px;height:1px;background:#d9d9d9;"></div><div class="ab" style="left:0px;top:151.3px;width:18.30000000000001px;height:1px;background:#cfcfcf;"></div><div class="ab" style="left:18.30000000000001px;top:161.0px;width:509.2px;height:1px;background:#d9d9d9;"></div><div class="ab" style="left:0px;top:161.0px;width:18.30000000000001px;height:1px;background:#cfcfcf;"></div><div class="ab" style="left:18.30000000000001px;top:171.3px;width:509.2px;height:1px;background:#d9d9d9;"></div><div class="ab" style="left:0px;top:171.3px;width:18.30000000000001px;height:1px;background:#cfcfcf;"></div><div class="ab" style="left:18.30000000000001px;top:183.60000000000002px;width:509.2px;height:1px;background:#d9d9d9;"></div><div class="ab" style="left:0px;top:183.60000000000002px;width:18.30000000000001px;height:1px;background:#cfcfcf;"></div><div class="ab" style="left:18.30000000000001px;top:193.8px;width:509.2px;height:1px;background:#d9d9d9;"></div><div class="ab" style="left:0px;top:193.8px;width:18.30000000000001px;height:1px;background:#cfcfcf;"></div><div class="ab" style="left:18.30000000000001px;top:203.65000000000003px;width:509.2px;height:1px;background:#d9d9d9;"></div><div class="ab" style="left:0px;top:203.65000000000003px;width:18.30000000000001px;height:1px;background:#cfcfcf;"></div><div class="ab" style="left:18.30000000000001px;top:213.50000000000006px;width:509.2px;height:1px;background:#d9d9d9;"></div><div class="ab" style="left:0px;top:213.50000000000006px;width:18.30000000000001px;height:1px;background:#cfcfcf;"></div><div class="ab" style="left:18.30000000000001px;top:223.35000000000008px;width:509.2px;height:1px;background:#d9d9d9;"></div><div class="ab" style="left:0px;top:223.35000000000008px;width:18.30000000000001px;height:1px;background:#cfcfcf;"></div><div class="ab" style="left:18.30000000000001px;top:233.2000000000001px;width:509.2px;height:1px;background:#d9d9d9;"></div><div class="ab" style="left:0px;top:233.2000000000001px;width:18.30000000000001px;height:1px;background:#cfcfcf;"></div><div class="ab" style="left:18.30000000000001px;top:243.05000000000013px;width:509.2px;height:1px;background:#d9d9d9;"></div><div class="ab" style="left:0px;top:243.05000000000013px;width:18.30000000000001px;height:1px;background:#cfcfcf;"></div><div class="ab" style="left:18.30000000000001px;top:252.90000000000015px;width:509.2px;height:1px;background:#d9d9d9;"></div><div class="ab" style="left:0px;top:252.90000000000015px;width:18.30000000000001px;height:1px;background:#cfcfcf;"></div><div class="ab" style="left:18.30000000000001px;top:262.75000000000017px;width:509.2px;height:1px;background:#d9d9d9;"></div><div class="ab" style="left:0px;top:262.75000000000017px;width:18.30000000000001px;height:1px;background:#cfcfcf;"></div><div class="ab" style="left:18.30000000000001px;top:272.6000000000002px;width:509.2px;height:1px;background:#d9d9d9;"></div><div class="ab" style="left:0px;top:272.6000000000002px;width:18.30000000000001px;height:1px;background:#cfcfcf;"></div><div class="ab" style="left:18.30000000000001px;top:282.4500000000002px;width:509.2px;height:1px;background:#d9d9d9;"></div><div class="ab" style="left:0px;top:282.4500000000002px;width:18.30000000000001px;height:1px;background:#cfcfcf;"></div><div class="ab" style="left:18.30000000000001px;top:292.30000000000024px;width:509.2px;height:1px;background:#d9d9d9;"></div><div class="ab" style="left:0px;top:292.30000000000024px;width:18.30000000000001px;height:1px;background:#cfcfcf;"></div><div class="ab" style="left:18.30000000000001px;top:302.15000000000026px;width:509.2px;height:1px;background:#d9d9d9;"></div><div class="ab" style="left:0px;top:302.15000000000026px;width:18.30000000000001px;height:1px;background:#cfcfcf;"></div><div class="ab" style="left:140.3px;top:27.30000000000001px;width:1px;height:12.5px;background:#d9d9d9;"></div><div class="ab" style="left:140.3px;top:39.80000000000001px;width:1px;height:12.5px;background:#d9d9d9;"></div><div class="ab" style="left:140.3px;top:66.80000000000001px;width:1px;height:14.5px;background:#d9d9d9;"></div><div class="ab" style="left:140.3px;top:95.40000000000003px;width:1px;height:13.899999999999977px;background:#d9d9d9;"></div><div class="ab" style="left:140.3px;top:109.30000000000001px;width:1px;height:11.0px;background:#d9d9d9;"></div><div class="ab" style="left:140.3px;top:120.30000000000001px;width:1px;height:10.0px;background:#d9d9d9;"></div><div class="ab" style="left:140.3px;top:130.3px;width:1px;height:10.5px;background:#d9d9d9;"></div><div class="ab" style="left:140.3px;top:151.8px;width:1px;height:9.699999999999989px;background:#d9d9d9;"></div><div class="ab" style="left:140.3px;top:161.5px;width:1px;height:10.300000000000011px;background:#d9d9d9;"></div><div class="ab" style="left:140.3px;top:171.8px;width:1px;height:12.300000000000011px;background:#d9d9d9;"></div><div class="ab" style="left:140.3px;top:184.10000000000002px;width:1px;height:10.199999999999989px;background:#d9d9d9;"></div><div class="ab" style="left:140.3px;top:194.3px;width:1px;height:9.850000000000023px;background:#d9d9d9;"></div><div class="ab" style="left:140.3px;top:204.15000000000003px;width:1px;height:9.850000000000023px;background:#d9d9d9;"></div><div class="ab" style="left:140.3px;top:214.00000000000006px;width:1px;height:9.850000000000023px;background:#d9d9d9;"></div><div class="ab" style="left:140.3px;top:223.85000000000008px;width:1px;height:9.850000000000023px;background:#d9d9d9;"></div><div class="ab" style="left:140.3px;top:233.7000000000001px;width:1px;height:9.850000000000023px;background:#d9d9d9;"></div><div class="ab" style="left:140.3px;top:243.55000000000013px;width:1px;height:9.850000000000023px;background:#d9d9d9;"></div><div class="ab" style="left:140.3px;top:253.40000000000015px;width:1px;height:9.850000000000023px;background:#d9d9d9;"></div><div class="ab" style="left:140.3px;top:263.25000000000017px;width:1px;height:9.850000000000023px;background:#d9d9d9;"></div><div class="ab" style="left:140.3px;top:273.1000000000002px;width:1px;height:9.850000000000023px;background:#d9d9d9;"></div><div class="ab" style="left:140.3px;top:282.9500000000002px;width:1px;height:9.850000000000023px;background:#d9d9d9;"></div><div class="ab" style="left:140.3px;top:0.0px;width:1px;height:9.600000000000023px;background:#c6c6c6;"></div><div class="ab" style="left:231.3px;top:27.30000000000001px;width:1px;height:12.5px;background:#d9d9d9;"></div><div class="ab" style="left:231.3px;top:39.80000000000001px;width:1px;height:12.5px;background:#d9d9d9;"></div><div class="ab" style="left:231.3px;top:66.80000000000001px;width:1px;height:14.5px;background:#d9d9d9;"></div><div class="ab" style="left:231.3px;top:95.40000000000003px;width:1px;height:13.899999999999977px;background:#d9d9d9;"></div><div class="ab" style="left:231.3px;top:109.30000000000001px;width:1px;height:11.0px;background:#d9d9d9;"></div><div class="ab" style="left:231.3px;top:120.30000000000001px;width:1px;height:10.0px;background:#d9d9d9;"></div><div class="ab" style="left:231.3px;top:130.3px;width:1px;height:10.5px;background:#d9d9d9;"></div><div class="ab" style="left:231.3px;top:151.8px;width:1px;height:9.699999999999989px;background:#d9d9d9;"></div><div class="ab" style="left:231.3px;top:161.5px;width:1px;height:10.300000000000011px;background:#d9d9d9;"></div><div class="ab" style="left:231.3px;top:171.8px;width:1px;height:12.300000000000011px;background:#d9d9d9;"></div><div class="ab" style="left:231.3px;top:184.10000000000002px;width:1px;height:10.199999999999989px;background:#d9d9d9;"></div><div class="ab" style="left:231.3px;top:194.3px;width:1px;height:9.850000000000023px;background:#d9d9d9;"></div><div class="ab" style="left:231.3px;top:204.15000000000003px;width:1px;height:9.850000000000023px;background:#d9d9d9;"></div><div class="ab" style="left:231.3px;top:214.00000000000006px;width:1px;height:9.850000000000023px;background:#d9d9d9;"></div><div class="ab" style="left:231.3px;top:223.85000000000008px;width:1px;height:9.850000000000023px;background:#d9d9d9;"></div><div class="ab" style="left:231.3px;top:233.7000000000001px;width:1px;height:9.850000000000023px;background:#d9d9d9;"></div><div class="ab" style="left:231.3px;top:243.55000000000013px;width:1px;height:9.850000000000023px;background:#d9d9d9;"></div><div class="ab" style="left:231.3px;top:253.40000000000015px;width:1px;height:9.850000000000023px;background:#d9d9d9;"></div><div class="ab" style="left:231.3px;top:263.25000000000017px;width:1px;height:9.850000000000023px;background:#d9d9d9;"></div><div class="ab" style="left:231.3px;top:273.1000000000002px;width:1px;height:9.850000000000023px;background:#d9d9d9;"></div><div class="ab" style="left:231.3px;top:282.9500000000002px;width:1px;height:9.850000000000023px;background:#d9d9d9;"></div><div class="ab" style="left:231.3px;top:0.0px;width:1px;height:9.600000000000023px;background:#c6c6c6;"></div><div class="ab" style="left:307.0px;top:27.30000000000001px;width:1px;height:12.5px;background:#d9d9d9;"></div><div class="ab" style="left:307.0px;top:39.80000000000001px;width:1px;height:12.5px;background:#d9d9d9;"></div><div class="ab" style="left:307.0px;top:52.30000000000001px;width:1px;height:14.5px;background:#d9d9d9;"></div><div class="ab" style="left:307.0px;top:66.80000000000001px;width:1px;height:14.5px;background:#d9d9d9;"></div><div class="ab" style="left:307.0px;top:81.30000000000001px;width:1px;height:14.100000000000023px;background:#d9d9d9;"></div><div class="ab" style="left:307.0px;top:95.40000000000003px;width:1px;height:13.899999999999977px;background:#d9d9d9;"></div><div class="ab" style="left:307.0px;top:109.30000000000001px;width:1px;height:11.0px;background:#d9d9d9;"></div><div class="ab" style="left:307.0px;top:120.30000000000001px;width:1px;height:10.0px;background:#d9d9d9;"></div><div class="ab" style="left:307.0px;top:130.3px;width:1px;height:10.5px;background:#d9d9d9;"></div><div class="ab" style="left:307.0px;top:140.8px;width:1px;height:11.0px;background:#d9d9d9;"></div><div class="ab" style="left:307.0px;top:151.8px;width:1px;height:9.699999999999989px;background:#d9d9d9;"></div><div class="ab" style="left:307.0px;top:161.5px;width:1px;height:10.300000000000011px;background:#d9d9d9;"></div><div class="ab" style="left:307.0px;top:171.8px;width:1px;height:12.300000000000011px;background:#d9d9d9;"></div><div class="ab" style="left:307.0px;top:184.10000000000002px;width:1px;height:10.199999999999989px;background:#d9d9d9;"></div><div class="ab" style="left:307.0px;top:194.3px;width:1px;height:9.850000000000023px;background:#d9d9d9;"></div><div class="ab" style="left:307.0px;top:204.15000000000003px;width:1px;height:9.850000000000023px;background:#d9d9d9;"></div><div class="ab" style="left:307.0px;top:214.00000000000006px;width:1px;height:9.850000000000023px;background:#d9d9d9;"></div><div class="ab" style="left:307.0px;top:223.85000000000008px;width:1px;height:9.850000000000023px;background:#d9d9d9;"></div><div class="ab" style="left:307.0px;top:233.7000000000001px;width:1px;height:9.850000000000023px;background:#d9d9d9;"></div><div class="ab" style="left:307.0px;top:243.55000000000013px;width:1px;height:9.850000000000023px;background:#d9d9d9;"></div><div class="ab" style="left:307.0px;top:253.40000000000015px;width:1px;height:9.850000000000023px;background:#d9d9d9;"></div><div class="ab" style="left:307.0px;top:263.25000000000017px;width:1px;height:9.850000000000023px;background:#d9d9d9;"></div><div class="ab" style="left:307.0px;top:273.1000000000002px;width:1px;height:9.850000000000023px;background:#d9d9d9;"></div><div class="ab" style="left:307.0px;top:282.9500000000002px;width:1px;height:9.850000000000023px;background:#d9d9d9;"></div><div class="ab" style="left:307.0px;top:0.0px;width:1px;height:9.600000000000023px;background:#c6c6c6;"></div><div class="ab" style="left:453.29999999999995px;top:9.600000000000023px;width:1px;height:17.69999999999999px;background:#d9d9d9;"></div><div class="ab" style="left:453.29999999999995px;top:27.30000000000001px;width:1px;height:12.5px;background:#d9d9d9;"></div><div class="ab" style="left:453.29999999999995px;top:39.80000000000001px;width:1px;height:12.5px;background:#d9d9d9;"></div><div class="ab" style="left:453.29999999999995px;top:52.30000000000001px;width:1px;height:14.5px;background:#d9d9d9;"></div><div class="ab" style="left:453.29999999999995px;top:66.80000000000001px;width:1px;height:14.5px;background:#d9d9d9;"></div><div class="ab" style="left:453.29999999999995px;top:81.30000000000001px;width:1px;height:14.100000000000023px;background:#d9d9d9;"></div><div class="ab" style="left:453.29999999999995px;top:95.40000000000003px;width:1px;height:13.899999999999977px;background:#d9d9d9;"></div><div class="ab" style="left:453.29999999999995px;top:109.30000000000001px;width:1px;height:11.0px;background:#d9d9d9;"></div><div class="ab" style="left:453.29999999999995px;top:120.30000000000001px;width:1px;height:10.0px;background:#d9d9d9;"></div><div class="ab" style="left:453.29999999999995px;top:130.3px;width:1px;height:10.5px;background:#d9d9d9;"></div><div class="ab" style="left:453.29999999999995px;top:140.8px;width:1px;height:11.0px;background:#d9d9d9;"></div><div class="ab" style="left:453.29999999999995px;top:151.8px;width:1px;height:9.699999999999989px;background:#d9d9d9;"></div><div class="ab" style="left:453.29999999999995px;top:161.5px;width:1px;height:10.300000000000011px;background:#d9d9d9;"></div><div class="ab" style="left:453.29999999999995px;top:171.8px;width:1px;height:12.300000000000011px;background:#d9d9d9;"></div><div class="ab" style="left:453.29999999999995px;top:184.10000000000002px;width:1px;height:10.199999999999989px;background:#d9d9d9;"></div><div class="ab" style="left:453.29999999999995px;top:194.3px;width:1px;height:9.850000000000023px;background:#d9d9d9;"></div><div class="ab" style="left:453.29999999999995px;top:204.15000000000003px;width:1px;height:9.850000000000023px;background:#d9d9d9;"></div><div class="ab" style="left:453.29999999999995px;top:214.00000000000006px;width:1px;height:9.850000000000023px;background:#d9d9d9;"></div><div class="ab" style="left:453.29999999999995px;top:223.85000000000008px;width:1px;height:9.850000000000023px;background:#d9d9d9;"></div><div class="ab" style="left:453.29999999999995px;top:233.7000000000001px;width:1px;height:9.850000000000023px;background:#d9d9d9;"></div><div class="ab" style="left:453.29999999999995px;top:243.55000000000013px;width:1px;height:9.850000000000023px;background:#d9d9d9;"></div><div class="ab" style="left:453.29999999999995px;top:253.40000000000015px;width:1px;height:9.850000000000023px;background:#d9d9d9;"></div><div class="ab" style="left:453.29999999999995px;top:263.25000000000017px;width:1px;height:9.850000000000023px;background:#d9d9d9;"></div><div class="ab" style="left:453.29999999999995px;top:273.1000000000002px;width:1px;height:9.850000000000023px;background:#d9d9d9;"></div><div class="ab" style="left:453.29999999999995px;top:282.9500000000002px;width:1px;height:9.850000000000023px;background:#d9d9d9;"></div><div class="ab" style="left:453.29999999999995px;top:0.0px;width:1px;height:9.600000000000023px;background:#c6c6c6;"></div><div class="ab" style="left:17.5px;top:0.0px;width:1px;height:292.00000000000006px;background:#a8a8a8;"></div><div class="ab" style="left:0px;top:9.000000000000028px;width:527.5px;height:1px;background:#b8b8b8;"></div><div class="ab" style="left:526.7px;top:0.0px;width:1px;height:292.00000000000006px;background:#b8b8b8;"></div><svg class="ab" style="left:12px;top:3.5px" width="5" height="5" viewBox="0 0 5 5"><path d="M5 0 V5 H0Z" fill="#b3b3b3"/></svg><div class="ab" style="left:18.30000000000001px;top:0.0px;width:122.5px;height:9.600000000000023px;background:#d2d2d2;"></div><div class="ab" style="left:18.30000000000001px;top:8.300000000000011px;width:122.5px;height:1.2px;background:#217346;"></div><div class="t" style="left:69.55000000000001px;width:20px;text-align:center;top:1.200000000000017px;font-size:7.8px;color:#1b5e33;-webkit-text-stroke:0.15px #1b5e33">A</div><div class="t" style="left:176.3px;width:20px;text-align:center;top:1.200000000000017px;font-size:7.8px;color:#444;-webkit-text-stroke:0.15px #444">B</div><div class="t" style="left:259.65px;width:20px;text-align:center;top:1.200000000000017px;font-size:7.8px;color:#444;-webkit-text-stroke:0.15px #444">C</div><div class="t" style="left:370.65px;width:20px;text-align:center;top:1.200000000000017px;font-size:7.8px;color:#444;-webkit-text-stroke:0.15px #444">D</div><div class="t" style="left:500px;width:20px;text-align:center;top:1.200000000000017px;font-size:7.8px;color:#444;-webkit-text-stroke:0.15px #444">E</div><div class="t" style="left:0px;width:18.30000000000001px;text-align:center;top:18.00000000000001px;font-size:8.8px;color:#444;-webkit-text-stroke:0.1px #444;transform:scaleX(0.75)">1</div><div class="t" style="left:0px;width:18.30000000000001px;text-align:center;top:30.50000000000001px;font-size:8.8px;color:#444;-webkit-text-stroke:0.1px #444;transform:scaleX(0.75)">2</div><div class="t" style="left:0px;width:18.30000000000001px;text-align:center;top:43.000000000000014px;font-size:8.8px;color:#444;-webkit-text-stroke:0.1px #444;transform:scaleX(0.75)">3</div><div class="t" style="left:0px;width:18.30000000000001px;text-align:center;top:57.500000000000014px;font-size:8.8px;color:#444;-webkit-text-stroke:0.1px #444;transform:scaleX(0.75)">4</div><div class="t" style="left:0px;width:18.30000000000001px;text-align:center;top:72.00000000000001px;font-size:8.8px;color:#444;-webkit-text-stroke:0.1px #444;transform:scaleX(0.75)">5</div><div class="t" style="left:0px;width:18.30000000000001px;text-align:center;top:86.10000000000004px;font-size:8.8px;color:#444;-webkit-text-stroke:0.1px #444;transform:scaleX(0.75)">6</div><div class="t" style="left:0px;width:18.30000000000001px;text-align:center;top:100.00000000000001px;font-size:8.8px;color:#444;-webkit-text-stroke:0.1px #444;transform:scaleX(0.75)">7</div><div class="t" style="left:0px;width:18.30000000000001px;text-align:center;top:111.00000000000001px;font-size:8.8px;color:#444;-webkit-text-stroke:0.1px #444;transform:scaleX(0.75)">8</div><div class="t" style="left:0px;width:18.30000000000001px;text-align:center;top:121.00000000000001px;font-size:8.8px;color:#444;-webkit-text-stroke:0.1px #444;transform:scaleX(0.75)">9</div><div class="t" style="left:0px;width:18.30000000000001px;text-align:center;top:131.5px;font-size:8.8px;color:#444;-webkit-text-stroke:0.1px #444;transform:scaleX(0.75)">10</div><div class="t" style="left:0px;width:18.30000000000001px;text-align:center;top:142.5px;font-size:8.8px;color:#444;-webkit-text-stroke:0.1px #444;transform:scaleX(0.75)">11</div><div class="t" style="left:0px;width:18.30000000000001px;text-align:center;top:152.2px;font-size:8.8px;color:#444;-webkit-text-stroke:0.1px #444;transform:scaleX(0.75)">12</div><div class="ab" style="left:0px;top:161.5px;width:17.50000000000001px;height:10.300000000000011px;background:#d2d2d2;"></div><div class="t" style="left:0px;width:18.30000000000001px;text-align:center;top:162.5px;font-size:8.8px;color:#217346;-webkit-text-stroke:0.1px #217346;transform:scaleX(0.75)">13</div><div class="t" style="left:0px;width:18.30000000000001px;text-align:center;top:174.8px;font-size:8.8px;color:#444;-webkit-text-stroke:0.1px #444;transform:scaleX(0.75)">14</div><div class="t" style="left:0px;width:18.30000000000001px;text-align:center;top:185.0px;font-size:8.8px;color:#444;-webkit-text-stroke:0.1px #444;transform:scaleX(0.75)">15</div><div class="t" style="left:0px;width:18.30000000000001px;text-align:center;top:194.85000000000002px;font-size:8.8px;color:#444;-webkit-text-stroke:0.1px #444;transform:scaleX(0.75)">16</div><div class="t" style="left:0px;width:18.30000000000001px;text-align:center;top:204.70000000000005px;font-size:8.8px;color:#444;-webkit-text-stroke:0.1px #444;transform:scaleX(0.75)">17</div><div class="t" style="left:0px;width:18.30000000000001px;text-align:center;top:214.55000000000007px;font-size:8.8px;color:#444;-webkit-text-stroke:0.1px #444;transform:scaleX(0.75)">18</div><div class="t" style="left:0px;width:18.30000000000001px;text-align:center;top:224.4000000000001px;font-size:8.8px;color:#444;-webkit-text-stroke:0.1px #444;transform:scaleX(0.75)">19</div><div class="t" style="left:0px;width:18.30000000000001px;text-align:center;top:234.2500000000001px;font-size:8.8px;color:#444;-webkit-text-stroke:0.1px #444;transform:scaleX(0.75)">20</div><div class="t" style="left:0px;width:18.30000000000001px;text-align:center;top:244.10000000000014px;font-size:8.8px;color:#444;-webkit-text-stroke:0.1px #444;transform:scaleX(0.75)">21</div><div class="t" style="left:0px;width:18.30000000000001px;text-align:center;top:253.95000000000016px;font-size:8.8px;color:#444;-webkit-text-stroke:0.1px #444;transform:scaleX(0.75)">22</div><div class="t" style="left:0px;width:18.30000000000001px;text-align:center;top:263.8000000000002px;font-size:8.8px;color:#444;-webkit-text-stroke:0.1px #444;transform:scaleX(0.75)">23</div><div class="t" style="left:0px;width:18.30000000000001px;text-align:center;top:273.6500000000002px;font-size:8.8px;color:#444;-webkit-text-stroke:0.1px #444;transform:scaleX(0.75)">24</div><div class="t" style="left:0px;width:18.30000000000001px;text-align:center;top:283.5000000000002px;font-size:8.8px;color:#444;-webkit-text-stroke:0.1px #444;transform:scaleX(0.75)">25</div><div class="t" style="left:21.5px;top:12.800000000000011px;font-size:14.1px;color:#000;font-weight:700;-webkit-text-stroke:0.15px #000;">Quarterly trends and customer sales by region</div><div class="t" style="left:20.80000000000001px;top:32.400000000000034px;font-size:8.6px;color:#222;font-weight:400;-webkit-text-stroke:0.15px #222;transform:scaleX(0.92);transform-origin:0 0">&lt;Region_Level&gt;</div><div class="ab" style="left:18.30000000000001px;top:52.30000000000001px;width:289.2px;height:14.5px;background:#f8f8f8;"></div><div class="ab" style="left:18.30000000000001px;top:66.10000000000002px;width:289.2px;height:1.6px;background:#5a5a5a;"></div><div class="t" style="left:137.5px;top:55.69999999999999px;font-size:11.3px;color:#111;font-weight:700;-webkit-text-stroke:0.15px #111;">&lt;Region&gt;</div><div class="t" style="left:130.5px;top:86.19999999999999px;font-size:8.35px;color:#222;font-weight:700;-webkit-text-stroke:0.15px #222;">Quarterly trends</div><div class="ab" style="left:18.30000000000001px;top:109.30000000000001px;width:122.5px;height:11.0px;background:#5b9bd5;"></div><div class="t" style="left:60px;top:112.10000000000002px;font-size:8.1px;color:#111;font-weight:700;-webkit-text-stroke:0.15px #111;">&lt;TFWPC&gt;</div><div class="ab" style="left:129px;top:110.10000000000002px;width:10.5px;height:9.5px;background:#f4f4f4;border:1px solid #c3c3c3"></div><div class="ab" style="left:132.2px;top:114.10000000000002px;width:0;height:0;border-left:2.5px solid transparent;border-right:2.5px solid transparent;border-top:2.5px solid #555"></div><div class="ab" style="left:18.30000000000001px;top:120.30000000000001px;width:122.5px;height:10.0px;background:#ddebf7;"></div><div class="ab" style="left:18.30000000000001px;top:129.3px;width:122.5px;height:1px;background:#9dc3e6;"></div><svg class="ab" style="left:137.3px;top:127.10000000000002px" width="3" height="3" viewBox="0 0 3 3"><path d="M3 0 V3 H0Z" fill="#2f5597"/></svg><div class="t" style="left:130.89999999999998px;top:143.0px;font-size:8.5px;color:#222;font-weight:700;-webkit-text-stroke:0.15px #222;">Customer sales</div><div class="ab" style="left:18.30000000000001px;top:161.5px;width:213.5px;height:10.300000000000011px;background:#efefef;"></div><div class="ab" style="left:18.30000000000001px;top:184.10000000000002px;width:213.5px;height:10.199999999999989px;background:#efefef;"></div><div class="ab" style="left:18.30000000000001px;top:161.0px;width:213.5px;height:1.2px;background:#3c3c3c;"></div><div class="ab" style="left:18.30000000000001px;top:171.3px;width:213.5px;height:1.2px;background:#3c3c3c;"></div><div class="ab" style="left:18.30000000000001px;top:183.60000000000002px;width:213.5px;height:1.2px;background:#3c3c3c;"></div><div class="ab" style="left:18.30000000000001px;top:193.8px;width:213.5px;height:1.2px;background:#3c3c3c;"></div><div class="ab" style="left:140.3px;top:161.5px;width:1.2px;height:32.80000000000001px;background:#3c3c3c;"></div><div class="ab" style="left:231.3px;top:161.5px;width:1.2px;height:32.80000000000001px;background:#3c3c3c;"></div><div class="t" style="left:59px;top:163.3px;font-size:8.6px;color:#111;font-weight:700;-webkit-text-stroke:0.15px #111;">Customer</div><div class="t" style="left:174.7px;top:163.3px;font-size:8.9px;color:#111;font-weight:700;-webkit-text-stroke:0.15px #111;">Sales</div><div class="t" style="left:23.69999999999999px;top:175.40000000000003px;font-size:8.4px;color:#222;font-weight:400;-webkit-text-stroke:0.15px #222;transform:scaleX(0.905);transform-origin:0 0">&lt;Customer_1&gt;</div><div class="t" style="left:145.39999999999998px;top:175.40000000000003px;font-size:8.5px;color:#222;font-weight:400;-webkit-text-stroke:0.15px #222;transform:scaleX(0.917);transform-origin:0 0">&lt;JWaPFv_1&gt;</div><div class="t" style="left:20.899999999999977px;top:185.8px;font-size:8.7px;color:#154d18;font-weight:700;-webkit-text-stroke:0.15px #154d18;">Region total</div><div class="t" style="left:202.5px;top:185.8px;font-size:8.7px;color:#222;font-weight:700;-webkit-text-stroke:0.15px #222;">-</div><div class="t" style="left:218.39999999999998px;top:185.8px;font-size:8.7px;color:#154d18;font-weight:700;-webkit-text-stroke:0.15px #154d18;">kr</div><div class="t" style="left:20.80000000000001px;top:206.40000000000003px;font-size:8.6px;color:#222;font-weight:400;-webkit-text-stroke:0.15px #222;transform:scaleX(0.92);transform-origin:0 0">&lt;/Region_Level&gt;</div><div class="ab" style="left:17.30000000000001px;top:161.0px;width:124.5px;height:11.5px;border:2px solid #217346"></div><div class="ab" style="left:138.60000000000002px;top:169.60000000000002px;width:4px;height:4px;background:#217346"></div></div>
<div class="ab" style="left:779.5px;top:232.5px;width:12px;height:292px;background:#e6e6e6"></div>
<div class="ab" style="left:780.4px;top:233.7px;width:10px;height:10.5px;background:#fff;border:1px solid #c6c6c6"></div>
<div class="ab" style="left:782.9px;top:237.2px;width:0;height:0;border-left:2.5px solid transparent;border-right:2.5px solid transparent;border-bottom:3px solid #555"></div>
<div class="ab" style="left:780.4px;top:244.2px;width:10px;height:258.2px;background:#fff;border:1px solid #c6c6c6"></div>
<div class="ab" style="left:780.4px;top:514.3px;width:10px;height:10px;background:#fff;border:1px solid #c6c6c6"></div>
<div class="ab" style="left:782.9px;top:518.3px;width:0;height:0;border-left:2.5px solid transparent;border-right:2.5px solid transparent;border-top:3px solid #555"></div>
<div class="ab" style="left:250px;top:524.2px;width:543px;height:23.3px;background:#e6e6e6;border-top:1px solid #bdbdbd"></div>
<div class="ab" style="left:270.5px;top:532px;width:0;height:0;border-top:3.5px solid transparent;border-bottom:3.5px solid transparent;border-right:4px solid #c4c4c4"></div>
<div class="ab" style="left:294.7px;top:531.8px;width:0;height:0;border-top:3.8px solid transparent;border-bottom:3.8px solid transparent;border-left:5px solid #1e6b3c"></div>
<div class="ab" style="left:333.2px;top:523.8px;width:149.8px;height:22px;background:#fff;border-left:1px solid #bdbdbd;border-right:1px solid #bdbdbd"></div>
<div class="ab" style="left:333.2px;top:543.8px;width:149.8px;height:2px;background:#217346"></div>
<div class="t" style="left:341.7px;top:527.5px;font-size:14.3px;font-weight:bold;color:#217346">Quarterly by region</div>
<div class="ab" style="left:483px;top:524.2px;width:1px;height:22px;background:#bdbdbd"></div>
<div class="t" style="left:495px;top:527.5px;font-size:13.8px;color:#333">Wine</div>
<div class="t" style="left:533px;top:527.5px;font-size:13.5px;font-weight:bold;color:#217346;letter-spacing:-0.3px">...</div>
<div class="ab" style="left:554.6px;top:528px;width:16px;height:16px;border:1.2px solid #777;border-radius:50%"></div>
<div class="ab" style="left:558.6px;top:535.4px;width:8px;height:1.3px;background:#777"></div>
<div class="ab" style="left:561.9px;top:532px;width:1.3px;height:8px;background:#777"></div>
<div class="ab" style="left:587px;top:529px;width:1.6px;height:1.6px;background:#9a9a9a"></div>
<div class="ab" style="left:587px;top:534px;width:1.6px;height:1.6px;background:#9a9a9a"></div>
<div class="ab" style="left:587px;top:539px;width:1.6px;height:1.6px;background:#9a9a9a"></div>
<div class="ab" style="left:601.7px;top:531.2px;width:178px;height:10px;background:#dadada"></div>
<div class="ab" style="left:601.7px;top:531.2px;width:10px;height:10px;background:#fff;border:1px solid #c6c6c6"></div>
<div class="ab" style="left:604.7px;top:533.7px;width:0;height:0;border-top:2.5px solid transparent;border-bottom:2.5px solid transparent;border-right:3px solid #555"></div>
<div class="ab" style="left:611.5px;top:531.2px;width:92.5px;height:10px;background:#fff;border:1px solid #c6c6c6"></div>
<div class="ab" style="left:768.5px;top:531.2px;width:11px;height:10px;background:#fff;border:1px solid #c6c6c6"></div>
<div class="ab" style="left:772.5px;top:533.7px;width:0;height:0;border-top:2.5px solid transparent;border-bottom:2.5px solid transparent;border-left:3px solid #555"></div>
</body></html>
